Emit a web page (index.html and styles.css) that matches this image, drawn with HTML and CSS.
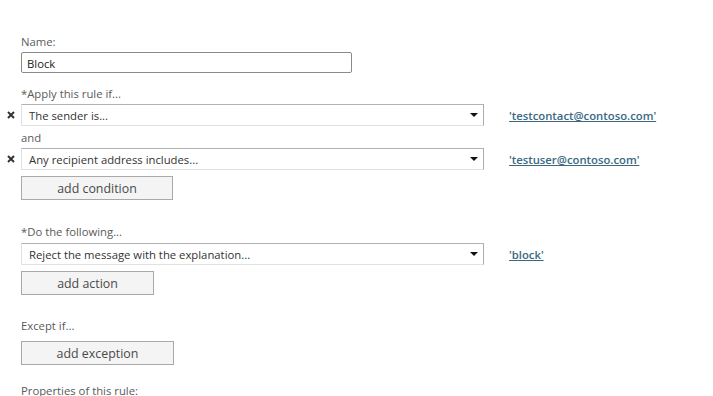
FILE: index.html
```html
<!DOCTYPE html>
<html lang="en">
  <head>
    <meta charset="UTF-8" />
    <meta name="viewport" content="width=device-width, initial-scale=1.0" />
    <title>New Rule</title>
    <link rel="stylesheet" href="styles.css">
  </head>
  <body>
    <div class="rule-form">
      <div class="label">Name:</div>
      <input type="text" class="name-input" value="Block" />

      <div class="label label-apply">*Apply this rule if...</div>
      <div class="row">
        <span class="remove"><svg width="8" height="8" viewBox="0 0 8 8"><path d="M1 1L7 7M7 1L1 7" stroke="#333" stroke-width="2"/></svg></span>
        <div class="dropdown">The sender is...<span class="arrow"></span></div>
        <a class="value-link" href="#">'testcontact@contoso.com'</a>
      </div>
      <div class="label label-and">and</div>
      <div class="row">
        <span class="remove"><svg width="8" height="8" viewBox="0 0 8 8"><path d="M1 1L7 7M7 1L1 7" stroke="#333" stroke-width="2"/></svg></span>
        <div class="dropdown">Any recipient address includes...<span class="arrow"></span></div>
        <a class="value-link" href="#">'testuser@contoso.com'</a>
      </div>
      <button class="btn btn-condition">add condition</button>

      <div class="label label-section">*Do the following...</div>
      <div class="row row-action">
        <span class="remove"></span>
        <div class="dropdown">Reject the message with the explanation...<span class="arrow"></span></div>
        <a class="value-link" href="#">'block'</a>
      </div>
      <button class="btn btn-action">add action</button>

      <div class="label label-section">Except if...</div>
      <button class="btn btn-exception">add exception</button>

      <div class="label label-props">Properties of this rule:</div>
    </div>
  </body>
</html>
```

FILE: styles.css
```css
body {
  margin: 0;
  background: #fff;
  font-family: "Open Sans", "Noto Sans", sans-serif;
  font-size: 11.3px;
  color: #444;
}
.rule-form {
  padding: 34px 0 0 21px;
}
.label {
  line-height: 16px;
  height: 16px;
  color: #5a5a5a;
}
.name-input {
  display: block;
  box-sizing: border-box;
  margin-top: 2px;
  width: 331px;
  height: 21px;
  border: 1px solid #8a8a8a;
  border-radius: 2px;
  padding: 1px 5px 0;
  font-family: inherit;
  font-size: 11.3px;
  color: #222;
}
.label-apply {
  margin-top: 13px;
}
.label-and {
  margin-top: 4px;
}
.row {
  display: flex;
  align-items: center;
  margin-left: -21px;
  margin-top: 2px;
}
.row-action {
  margin-top: 3px;
}
.remove {
  width: 21px;
  display: flex;
  justify-content: flex-start;
  padding-left: 7px;
  box-sizing: border-box;
}
.dropdown {
  position: relative;
  box-sizing: border-box;
  width: 463px;
  height: 22px;
  line-height: 21px;
  padding-left: 7px;
  border: 1px solid;
  border-color: #b3b3b3 #ababab #e1e1e1 #e1e1e1;
  color: #333;
}
.arrow {
  position: absolute;
  right: 5px;
  top: 8px;
  width: 0;
  height: 0;
  border-left: 4px solid transparent;
  border-right: 4px solid transparent;
  border-top: 4px solid #111;
}
.value-link {
  margin-left: 25px;
  color: #3b6882;
  font-weight: 600;
  text-decoration: underline;
}
.btn {
  display: block;
  box-sizing: border-box;
  height: 24px;
  margin-top: 6px;
  background: #f4f4f4;
  border: 1px solid #a9a9a9;
  font-family: inherit;
  font-size: 12.4px;
  color: #4a4a4a;
  padding: 0;
}
.btn-condition {
  width: 152px;
}
.btn-action {
  width: 133px;
}
.btn-exception {
  width: 153px;
  margin-top: 7px;
}
.label-section {
  margin-top: 24px;
}
.btn-action + .label-section {
  margin-top: 23px;
}
.label-props {
  margin-top: 18px;
}
```
